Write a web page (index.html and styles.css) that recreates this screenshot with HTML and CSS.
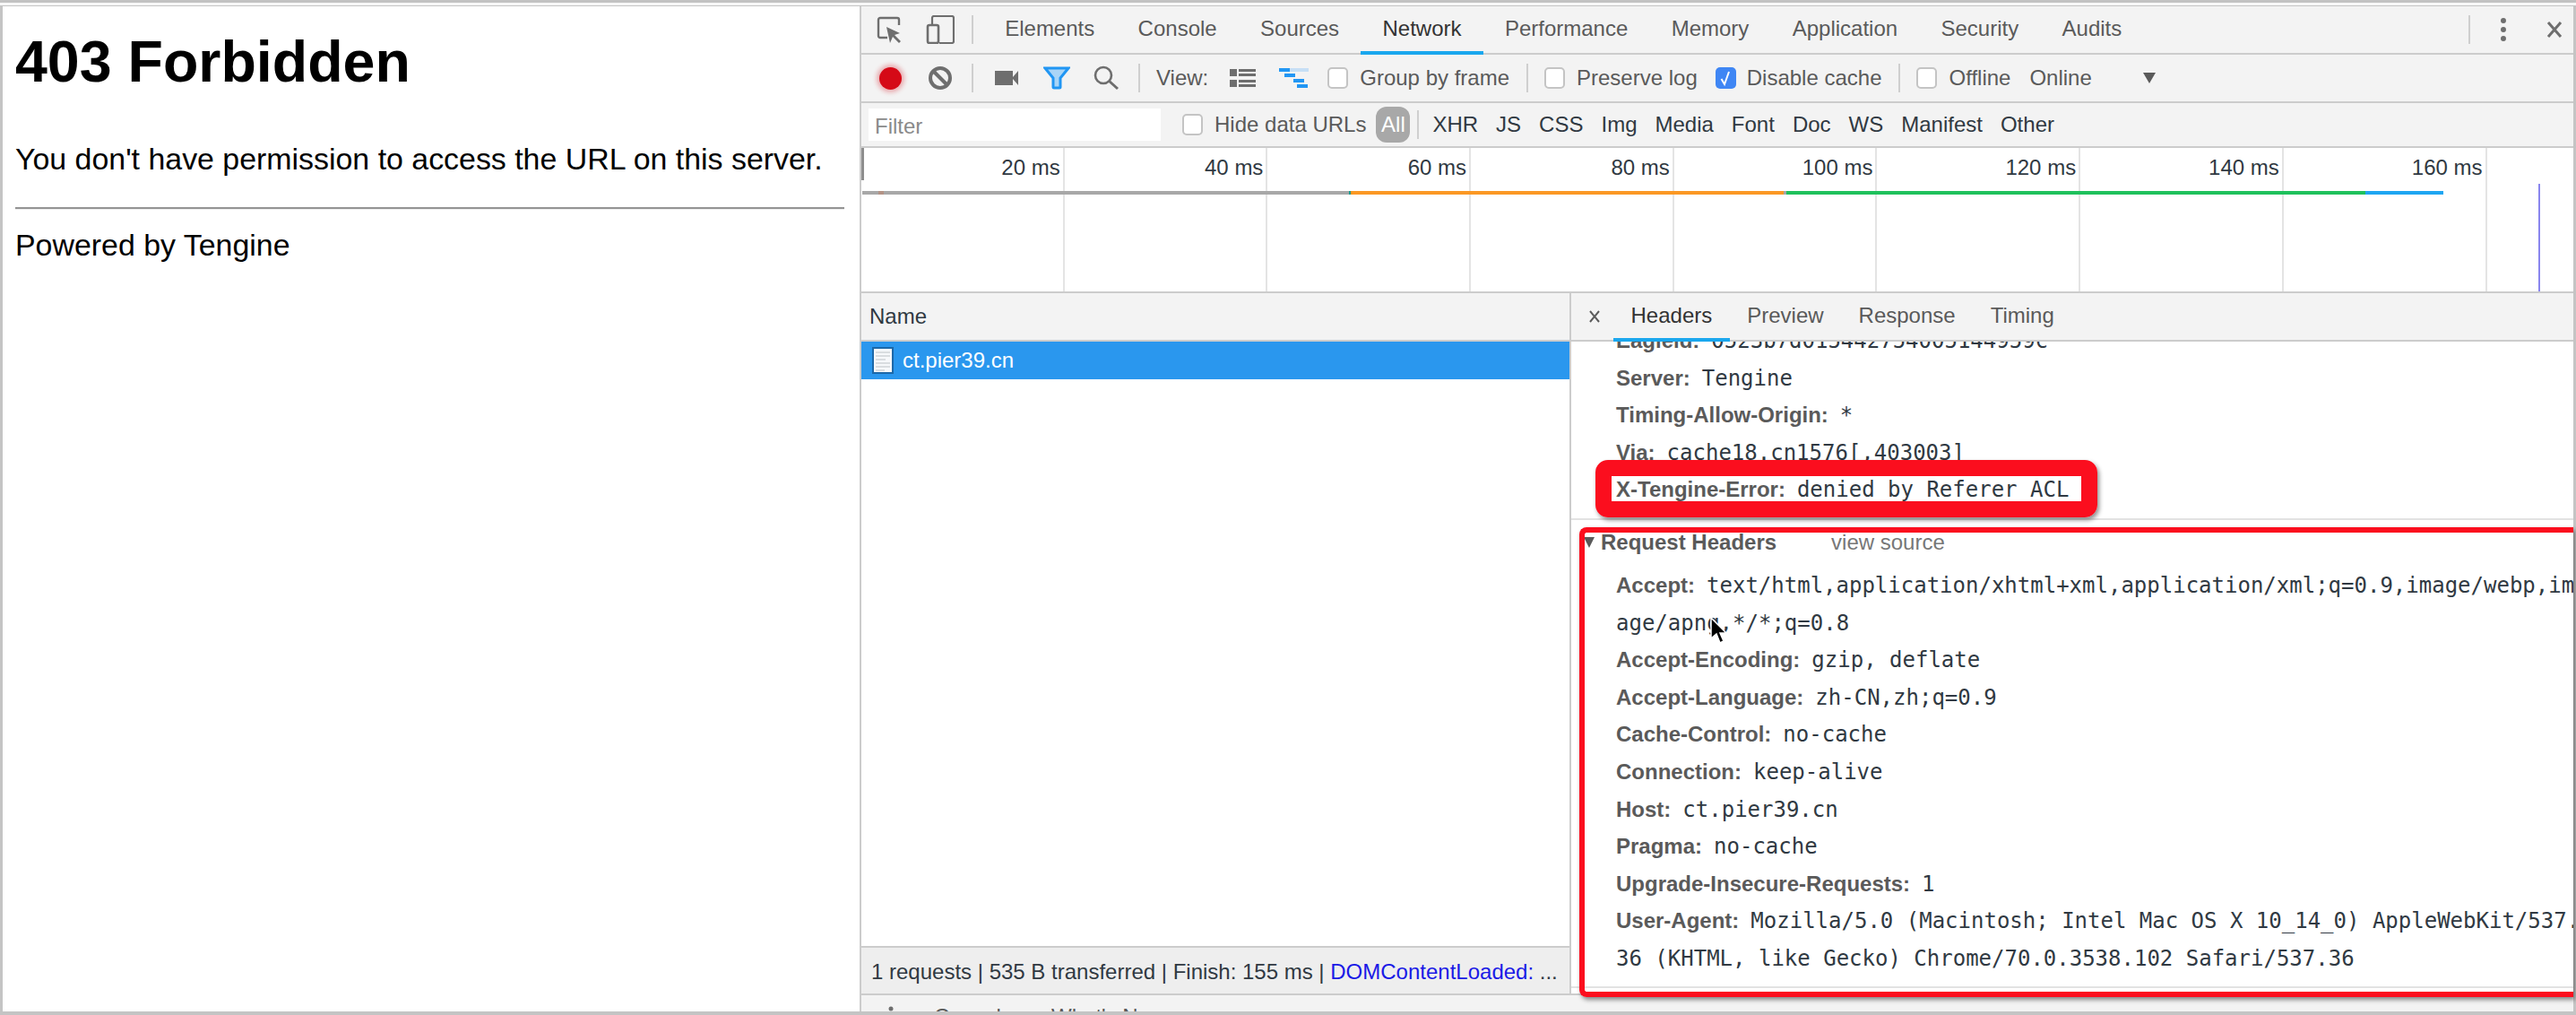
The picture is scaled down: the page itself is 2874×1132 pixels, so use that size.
FILE: index.html
```html
<!DOCTYPE html>
<html>
    <head>
        <meta charset="utf-8">
        <title>403 Forbidden</title>
        <link rel="stylesheet" href="styles.css">
    </head>
    <body>
        <div class="topline"></div>
        <div class="window">
            <div class="page">
                <h1>403 Forbidden</h1>
                <p class="msg">You don't have permission to access the URL on this server.</p>
                <div class="rule"></div>
                <p class="powered">Powered by Tengine</p>
            </div>
            <div class="devtools">
                <div class="bar bar-tabs">
                    <span class="slot">
                        <svg width="30" height="30" viewBox="0 0 30 30"><path d="M12 24H4a2 2 0 0 1-2-2V4a2 2 0 0 1 2-2h19a2 2 0 0 1 2 2v6" fill="none" stroke="#6e6e6e" stroke-width="2.4"/><path d="M11 12l15 7-6 2 7 7-2 2-7-7-3 7z" fill="#6e6e6e"/></svg>
                    </span>
                    <span class="slot">
                        <svg width="32" height="32" viewBox="0 0 32 32"><path d="M7 10V3a2 2 0 0 1 2-2h20a2 2 0 0 1 2 2v26a2 2 0 0 1-2 2H15" fill="none" stroke="#6e6e6e" stroke-width="2.2"/><rect x="2" y="11" width="12" height="20" rx="2" fill="none" stroke="#6e6e6e" stroke-width="2.6"/></svg>
                    </span>
                    <span class="sep"></span>
                    <span class="tab first-tab">Elements</span>
                    <span class="tab">Console</span>
                    <span class="tab">Sources</span>
                    <span class="tab active">Network</span>
                    <span class="tab">Performance</span>
                    <span class="tab">Memory</span>
                    <span class="tab">Application</span>
                    <span class="tab">Security</span>
                    <span class="tab">Audits</span>
                    <span class="sep sep-end"></span>
                    <svg class="dots" width="8" height="28" viewBox="0 0 8 28"><circle cx="4" cy="4" r="3" fill="#6e6e6e"/><circle cx="4" cy="14" r="3" fill="#6e6e6e"/><circle cx="4" cy="24" r="3" fill="#6e6e6e"/></svg>
                    <svg class="close" width="18" height="18" viewBox="0 0 18 18"><path d="M2 1l14 16M16 1L2 17" stroke="#6e6e6e" stroke-width="3"/></svg>
                </div>
                <div class="bar bar-controls">
                    <span class="slot"><span class="record"></span></span>
                    <span class="slot">
                        <svg width="28" height="28" viewBox="0 0 28 28"><circle cx="14" cy="14" r="11" fill="none" stroke="#6e6e6e" stroke-width="4"/><path d="M6 6l16 16" stroke="#6e6e6e" stroke-width="4"/></svg>
                    </span>
                    <span class="sep"></span>
                    <span class="slot slot-camera">
                        <svg width="28" height="18" viewBox="0 0 28 18"><path d="M1 1h20v16H1zM21 8l6-7v16l-6-7z" fill="#6e6e6e"/></svg>
                    </span>
                    <span class="slot slot-filter">
                        <svg width="30" height="26" viewBox="0 0 30 26"><path d="M2 2h26L19 13v10a1 1 0 0 1-1 1h-6a1 1 0 0 1-1-1V13z" fill="#a9d5f7" stroke="#2196f3" stroke-width="3"/></svg>
                    </span>
                    <span class="slot slot-search">
                        <svg width="30" height="30" viewBox="0 0 30 30"><circle cx="12" cy="12" r="9" fill="none" stroke="#6e6e6e" stroke-width="2.6"/><path d="M18 18l10 9" stroke="#6e6e6e" stroke-width="3"/></svg>
                    </span>
                    <span class="sep sep-view"></span>
                    <span class="view-label">View:</span>
                    <svg class="list-icon" width="30" height="20" viewBox="0 0 30 20"><path d="M0 0h8v8H0zM0 12h8v8H0zM10 0h19v3H10zM10 5h19v3H10zM10 12h19v3H10zM10 17h19v3H10z" fill="#6e6e6e"/></svg>
                    <svg class="fall-icon" width="34" height="22" viewBox="0 0 34 22"><path d="M12 0h21v4H12z" fill="#c6dff5"/><path d="M0 0h12v4H0zM6 6h12v4H6zM16 12h12v4H16zM20 18h12v4H20z" fill="#2196f3"/></svg>
                    <span class="check check-group"></span>
                    <span class="check-text">Group by frame</span>
                    <span class="sep sep-preserve"></span>
                    <span class="check"></span>
                    <span class="check-text">Preserve log</span>
                    <span class="check on">
                        <svg width="23" height="24" viewBox="0 0 23 24"><path d="M6.500 13l3.500 6 5-14" fill="none" stroke="#fff" stroke-width="2"/></svg>
                    </span>
                    <span class="check-text text-cache">Disable cache</span>
                    <span class="sep sep-offline"></span>
                    <span class="check"></span>
                    <span class="check-text">Offline</span>
                    <span class="online">Online</span>
                    <span class="arrow-down"></span>
                </div>
                <div class="bar bar-filter">
                    <span class="filter-input">Filter</span>
                    <span class="check"></span>
                    <span class="check-text">Hide data URLs</span>
                    <span class="pill">All</span>
                    <span class="sep sep-types"></span>
                    <span class="types">
                        <span>XHR</span><span>JS</span><span>CSS</span><span>Img</span><span>Media</span><span>Font</span><span>Doc</span><span>WS</span><span>Manifest</span><span>Other</span>
                    </span>
                </div>
                <div class="timeline">
                    <div class="tick">20 ms</div>
                    <div class="tick">40 ms</div>
                    <div class="tick">60 ms</div>
                    <div class="tick">80 ms</div>
                    <div class="tick">100 ms</div>
                    <div class="tick">120 ms</div>
                    <div class="tick">140 ms</div>
                    <div class="tick">160 ms</div>
                    <span class="handle"></span>
                    <div class="waterfall">
                        <span class="seg seg-stalled"></span>
                        <span class="seg seg-mark"></span>
                        <span class="seg seg-queue"></span>
                        <span class="seg seg-teal"></span>
                        <span class="seg seg-orange"></span>
                        <span class="seg seg-gap"></span>
                        <span class="seg seg-green"></span>
                        <span class="seg seg-blue"></span>
                    </div>
                    <span class="load-line"></span>
                </div>
                <div class="split">
                    <div class="requests">
                        <div class="panel-head name-head">Name</div>
                        <div class="request-row">
                            <svg width="24" height="30" viewBox="0 0 24 30"><rect x="1" y="1" width="22" height="28" fill="#f6f8fa" stroke="#1c68a8" stroke-width="2"/><path d="M4 6h16M4 10h16M4 14h11M4 18h16M4 22h16M4 26h10" stroke="#d9dde0" stroke-width="2"/></svg>
                            <span>ct.pier39.cn</span>
                        </div>
                        <div class="requests-fill"></div>
                        <div class="summary">1 requests | 535 B transferred | Finish: 155 ms | <span class="dcl">DOMContentLoaded:</span> ...</div>
                    </div>
                    <div class="details">
                        <div class="panel-head detail-tabs">
                            <svg class="detail-close" width="14" height="14" viewBox="0 0 14 14"><path d="M2 1l10 12M12 1L2 13" stroke="#5a5a5a" stroke-width="2"/></svg>
                            <span class="dtab active">Headers</span>
                            <span class="dtab">Preview</span>
                            <span class="dtab">Response</span>
                            <span class="dtab">Timing</span>
                        </div>
                        <div class="detail-body">
                            <div class="headers">
                                <div class="hrow"><b>Eagleid:</b>0523b7d015442754005144959c</div>
                                <div class="hrow"><b>Server:</b>Tengine</div>
                                <div class="hrow"><b>Timing-Allow-Origin:</b>*</div>
                                <div class="hrow"><b>Via:</b>cache18.cn1576[,403003]</div>
                                <div class="hrow"><b>X-Tengine-Error:</b>denied by Referer ACL</div>
                            </div>
                            <div class="section-head">
                                <span class="tri"></span>
                                <b>Request Headers</b>
                                <span class="view-source">view source</span>
                            </div>
                            <div class="headers">
                                <div class="hrow"><b>Accept:</b>text/html,application/xhtml+xml,application/xml;q=0.9,image/webp,im<br>age/apng,*/*;q=0.8</div>
                                <div class="hrow"><b>Accept-Encoding:</b>gzip, deflate</div>
                                <div class="hrow"><b>Accept-Language:</b>zh-CN,zh;q=0.9</div>
                                <div class="hrow"><b>Cache-Control:</b>no-cache</div>
                                <div class="hrow"><b>Connection:</b>keep-alive</div>
                                <div class="hrow"><b>Host:</b>ct.pier39.cn</div>
                                <div class="hrow"><b>Pragma:</b>no-cache</div>
                                <div class="hrow"><b>Upgrade-Insecure-Requests:</b>1</div>
                                <div class="hrow"><b>User-Agent:</b>Mozilla/5.0 (Macintosh; Intel Mac OS X 10_14_0) AppleWebKit/537.<br>36 (KHTML, like Gecko) Chrome/70.0.3538.102 Safari/537.36</div>
                            </div>
                            <div class="end-rule"></div>
                        </div>
                    </div>
                </div>
                <div class="drawer">
                    <svg width="6" height="24" viewBox="0 0 6 24"><circle cx="3" cy="3" r="2.500" fill="#6e6e6e"/><circle cx="3" cy="12" r="2.500" fill="#6e6e6e"/><circle cx="3" cy="21" r="2.500" fill="#6e6e6e"/></svg>
                    <span class="drawer-tab">Console</span>
                    <span class="drawer-tab">What's New</span>
                    <span class="drawer-close">×</span>
                </div>
            </div>
        </div>

        <!-- annotations drawn on top of the screenshot -->
        <div class="mark mark-error"></div>
        <div class="mark mark-request"></div>
        <svg class="pointer" width="20" height="30" viewBox="0 0 20 30"><path d="M2 1v23l6-5 4 10 4-2-4-9h7z" fill="#000" stroke="#fff" stroke-width="1.500"/></svg>
    </body>
</html>
```

FILE: styles.css
```css
* {
    box-sizing: border-box;
}
html, body {
    margin: 0;
    height: 100%;
}
body {
    position: relative;
    height: 1132px;
    overflow: hidden;
    background-color: #c4c4c4;
    font-family: "Liberation Sans", Arial, sans-serif;
    font-size: 24px;
    color: #303942;
}

.topline {
    height: 7px;
    border-top: 3px solid #c2c2c2;
    border-bottom: 1px solid #c4c4c4;
    background-color: #f7f7f7;
}
.window {
    display: flex;
    height: 1121px;
    margin: 0 3px;
    overflow: hidden;
    background-color: white;
}

/* error page on the left */
.page {
    width: 956px;
    flex: none;
    padding: 28px 17px 0 14px;
    color: black;
}
.page h1 {
    margin: 0 0 57px;
    font-size: 64.5px;
    line-height: 68px;
    font-weight: bold;
}
.msg, .powered {
    margin: 0;
    font-size: 33.9px;
    line-height: 34px;
    white-space: nowrap;
}
.rule {
    height: 3px;
    margin: 37px 0 22px;
    border-top: 2px solid #949494;
    border-bottom: 1px solid #eeeeee;
}

/* devtools */
.devtools {
    flex: 1;
    min-width: 0;
    display: flex;
    flex-direction: column;
    border-left: 2px solid #cccccc;
}
.bar {
    display: flex;
    align-items: center;
    flex: none;
    background-color: #f3f3f3;
    border-bottom: 2px solid #cccccc;
    color: #5a5a5a;
    white-space: nowrap;
}
.bar-tabs {
    height: 54px;
    padding-left: 4px;
}
.bar-controls {
    height: 54px;
    padding-left: 4px;
}
.bar-filter {
    height: 50px;
    padding-left: 8px;
}
.slot {
    display: flex;
    align-items: center;
    justify-content: center;
    width: 56px;
    height: 100%;
}
.slot svg {
    display: block;
}
.sep {
    width: 2px;
    height: 32px;
    margin: 0 8px 0 7px;
    background-color: #cfcfcf;
}
.tab {
    display: flex;
    align-items: center;
    height: 54px;
    padding: 0 24.2px;
    border-bottom: 4px solid transparent;
    margin-bottom: -2px;
}
.first-tab {
    margin-left: 3px;
}
.tab.active {
    color: #333333;
    border-bottom-color: #1aa7ee;
}
.sep-end {
    margin: 0;
    margin-left: auto;
}
.dots {
    margin-left: 33px;
}
.close {
    margin-left: 44px;
    margin-right: 12px;
}

.record {
    width: 25px;
    height: 25px;
    border-radius: 50%;
    background-color: #d50a17;
    box-shadow: 0 0 5px 3px rgba(213, 10, 23, 0.3);
}
.slot-camera {
    width: 57px;
}
.slot-filter {
    width: 55px;
}
.sep-view {
    margin: 0 0 0 8px;
}
.view-label {
    margin-left: 18px;
}
.list-icon {
    margin-left: 24px;
}
.fall-icon {
    margin-left: 25px;
}
.check {
    display: inline-block;
    width: 23px;
    height: 24px;
    flex: none;
    border: 2px solid #c4c4c4;
    border-radius: 5px;
    background-color: white;
}
.check.on {
    border: none;
    background-color: #3f86f4;
}
.check.on svg {
    display: block;
}
.check-group {
    margin-left: 20px;
}
.check-text {
    margin-left: 13px;
}
.sep-preserve {
    margin: 0 18px 0 19px;
}
.check.on {
    margin-left: 20px;
}
.text-cache {
    margin-left: 12px;
}
.sep-offline {
    margin: 0 18px 0 19px;
}
.online {
    margin-left: 21px;
}
.arrow-down {
    width: 0;
    height: 0;
    margin-left: 57px;
    border-style: solid;
    border-width: 12px 7px 0;
    border-color: #5a5a5a transparent transparent;
}

.filter-input {
    display: flex;
    align-items: center;
    width: 326px;
    height: 36px;
    padding: 3px 0 0 7px;
    margin-right: 24px;
    background-color: white;
    color: #8a8a8a;
}
.pill {
    width: 38px;
    height: 40px;
    margin-left: 11px;
    border-radius: 12px;
    background-color: #a8a8a8;
    color: white;
    text-align: center;
    line-height: 40px;
}
.sep-types {
    height: 32px;
    margin: 0 15px 0 8px;
}
.types {
    display: flex;
    gap: 20px;
    color: #303942;
}

.timeline {
    position: relative;
    display: flex;
    flex: none;
    height: 162px;
    border-bottom: 2px solid #cccccc;
    background-color: white;
}
.tick {
    width: 226.7px;
    flex: none;
    padding-right: 3px;
    border-right: 2px solid #e4e4e4;
    text-align: right;
    line-height: 44px;
}
.handle {
    position: absolute;
    left: 0;
    top: 0;
    width: 3px;
    height: 36px;
    background-color: #8e8e8e;
}
.waterfall {
    position: absolute;
    left: 1px;
    top: 48px;
    display: flex;
    height: 4px;
}
.seg {
    display: block;
    height: 100%;
}
.seg-stalled {
    width: 18px;
    background-color: #a8a8a8;
}
.seg-mark {
    width: 6px;
    background-color: #b39386;
}
.seg-queue {
    width: 519px;
    background-color: #a8a8a8;
}
.seg-teal {
    width: 2px;
    background-color: #1a9c8c;
}
.seg-orange {
    width: 483px;
    background-color: #fb9824;
}
.seg-gap {
    width: 3px;
    background-color: #a8a8a8;
}
.seg-green {
    width: 646px;
    background-color: #1fc15c;
}
.seg-blue {
    width: 87px;
    background-color: #1ea6f2;
}
.load-line {
    position: absolute;
    left: 1871px;
    top: 40px;
    width: 2px;
    height: 120px;
    background-color: #8a86ee;
}

.split {
    display: flex;
    flex: none;
    height: 783px;
    border-bottom: 2px solid #cccccc;
    background-color: white;
}
.requests {
    display: flex;
    flex-direction: column;
    width: 792px;
    flex: none;
    border-right: 2px solid #cccccc;
}
.panel-head {
    display: flex;
    align-items: center;
    height: 54px;
    flex: none;
    background-color: #f3f3f3;
    border-bottom: 2px solid #cccccc;
}
.name-head {
    padding-left: 9px;
}
.request-row {
    display: flex;
    align-items: center;
    height: 42px;
    flex: none;
    padding-left: 12px;
    gap: 10px;
    background-color: #2a97ee;
    color: white;
}
.request-row svg {
    display: block;
}
.requests-fill {
    flex: 1;
}
.summary {
    height: 53px;
    flex: none;
    padding-left: 11px;
    border-top: 2px solid #cccccc;
    background-color: #eeeeee;
    line-height: 53px;
    white-space: nowrap;
}
.dcl {
    color: #1a1ae6;
}

.details {
    flex: 1;
    min-width: 0;
    display: flex;
    flex-direction: column;
}
.detail-tabs {
    color: #5a5a5a;
    padding-left: 19px;
}
.detail-close {
    margin-right: 14px;
}
.dtab {
    display: flex;
    align-items: center;
    height: 54px;
    padding: 0 19.5px;
    margin-bottom: -2px;
    border-bottom: 4px solid transparent;
}
.dtab.active {
    color: #333333;
    border-bottom-color: #1aa7ee;
}
.detail-body {
    flex: 1;
    min-height: 0;
    overflow: hidden;
    font-family: "DejaVu Sans Mono", "Liberation Mono", monospace;
}
.headers {
    padding-left: 50px;
    white-space: nowrap;
}
.headers:first-child {
    margin-top: -21px;
    padding-bottom: 10px;
    border-bottom: 2px solid #e2e2e2;
}
.hrow {
    line-height: 41.6px;
}
.hrow b {
    margin-right: 13px;
    font-family: "Liberation Sans", Arial, sans-serif;
    font-weight: bold;
    line-height: 1;
    color: #5a5a5a;
}
.section-head {
    display: flex;
    align-items: center;
    height: 44px;
    margin: 3px 0 6px;
    padding-left: 14px;
    font-family: "Liberation Sans", Arial, sans-serif;
    color: #5a5a5a;
}
.section-head b {
    margin-left: 7px;
}
.tri {
    width: 0;
    height: 0;
    border-style: solid;
    border-width: 12px 6px 0;
    border-color: #5a5a5a transparent transparent;
}
.view-source {
    margin-left: 61px;
    color: #777777;
}
.end-rule {
    height: 2px;
    margin-top: 9px;
    background-color: #e2e2e2;
}

.drawer {
    display: flex;
    align-items: center;
    height: 48px;
    flex: none;
    padding-left: 30px;
    background-color: #f3f3f3;
    color: #5a5a5a;
}
.drawer-tab {
    margin-left: 45px;
}
.drawer-tab + .drawer-tab {
    margin-left: 43px;
}
.drawer-close {
    margin-left: auto;
    margin-right: 24px;
}

.mark {
    position: absolute;
    border-style: solid;
    border-color: #fb0e1e;
    box-shadow: 2px 3px 5px rgba(0, 0, 0, 0.45);
}
.mark-error {
    left: 1780px;
    top: 513px;
    width: 560px;
    height: 64px;
    border-width: 18px;
    border-radius: 14px;
}
.mark-request {
    left: 1762px;
    top: 588px;
    width: 1109px;
    height: 524px;
    border-width: 6px 0 6px 6px;
    border-radius: 8px 0 0 8px;
}
.pointer {
    position: absolute;
    left: 1907px;
    top: 688px;
}
```
